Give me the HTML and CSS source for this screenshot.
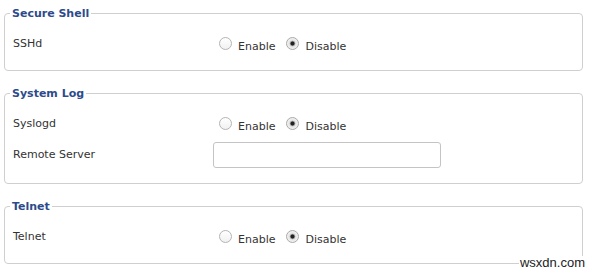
FILE: index.html
```html
<!DOCTYPE html>
<html>
<head>
<meta charset="utf-8">
<link rel="stylesheet" href="styles.css">
</head>
<body>
<div class="page">
  <fieldset class="group">
    <legend class="group-title">Secure Shell</legend>
    <div class="row">
      <div class="row-label">SSHd</div>
      <div class="row-controls">
        <label class="opt"><input type="radio" name="sshd"><span class="opt-text">Enable</span></label>
        <label class="opt"><input type="radio" name="sshd" checked><span class="opt-text">Disable</span></label>
      </div>
    </div>
  </fieldset>

  <fieldset class="group">
    <legend class="group-title">System Log</legend>
    <div class="row">
      <div class="row-label">Syslogd</div>
      <div class="row-controls">
        <label class="opt"><input type="radio" name="syslogd"><span class="opt-text">Enable</span></label>
        <label class="opt"><input type="radio" name="syslogd" checked><span class="opt-text">Disable</span></label>
      </div>
    </div>
    <div class="row row-input">
      <div class="row-label">Remote Server</div>
      <div class="row-controls">
        <input class="text-input" type="text">
      </div>
    </div>
  </fieldset>

  <fieldset class="group">
    <legend class="group-title">Telnet</legend>
    <div class="row">
      <div class="row-label">Telnet</div>
      <div class="row-controls">
        <label class="opt"><input type="radio" name="telnet"><span class="opt-text">Enable</span></label>
        <label class="opt"><input type="radio" name="telnet" checked><span class="opt-text">Disable</span></label>
      </div>
    </div>
  </fieldset>
</div>
<div class="watermark">wsxdn.com</div>
</body>
</html>
```

FILE: styles.css
```css
html, body {
  margin: 0;
  padding: 0;
  background: #fff;
}

body {
  font-family: "DejaVu Sans", "Liberation Sans", sans-serif;
  font-size: 11px;
  color: #333;
  position: relative;
  width: 598px;
  height: 273px;
  overflow: hidden;
}

.page {
  padding: 7px 15px 0 4px;
}

.group {
  margin: 0 0 16px 0;
  border: 1px solid #cfcfcf;
  border-radius: 4px;
  padding: 8px 0 12px 5px;
  min-width: 0;
}

.group-title {
  padding: 0 2px;
  font-weight: bold;
  font-size: 11px;
  line-height: 13px;
  color: #2d4b8b;
}

.row {
  display: flex;
  align-items: center;
  height: 30px;
  padding-left: 3px;
}

.row-input {
  height: 33px;
}

.row-label {
  width: 200px;
  flex: none;
}

.row-controls {
  display: flex;
  align-items: center;
  gap: 11px;
}

.opt {
  display: flex;
  align-items: center;
  gap: 6px;
}

.opt:first-child {
  margin-left: 6px;
}

.opt-text {
  margin-top: 7px;
}

.opt input[type="radio"] {
  -webkit-appearance: none;
  appearance: none;
  width: 13px;
  height: 13px;
  margin: 0;
  border: 1px solid #b4b4b4;
  border-radius: 50%;
  background: linear-gradient(#ffffff, #f1f1f1);
  box-sizing: border-box;
}

.opt input[type="radio"]:checked {
  background: radial-gradient(circle at 50% 50%, #222 0, #222 1.6px, #9a9a9a 2.3px, #e4e4e4 3.2px, #f6f6f6 6px);
  border-color: #a9a9a9;
}

.text-input {
  width: 228px;
  height: 26px;
  box-sizing: border-box;
  border: 1px solid #c4c4c4;
  border-radius: 3px;
  background: #fff;
  margin: 0;
  padding: 0 4px;
  font: inherit;
}

.watermark {
  position: absolute;
  right: 12px;
  bottom: 3px;
  font-family: "Liberation Sans", sans-serif;
  font-size: 13px;
  line-height: 14px;
  color: #222;
  background: #fff;
  padding: 0 1px;
}
```
